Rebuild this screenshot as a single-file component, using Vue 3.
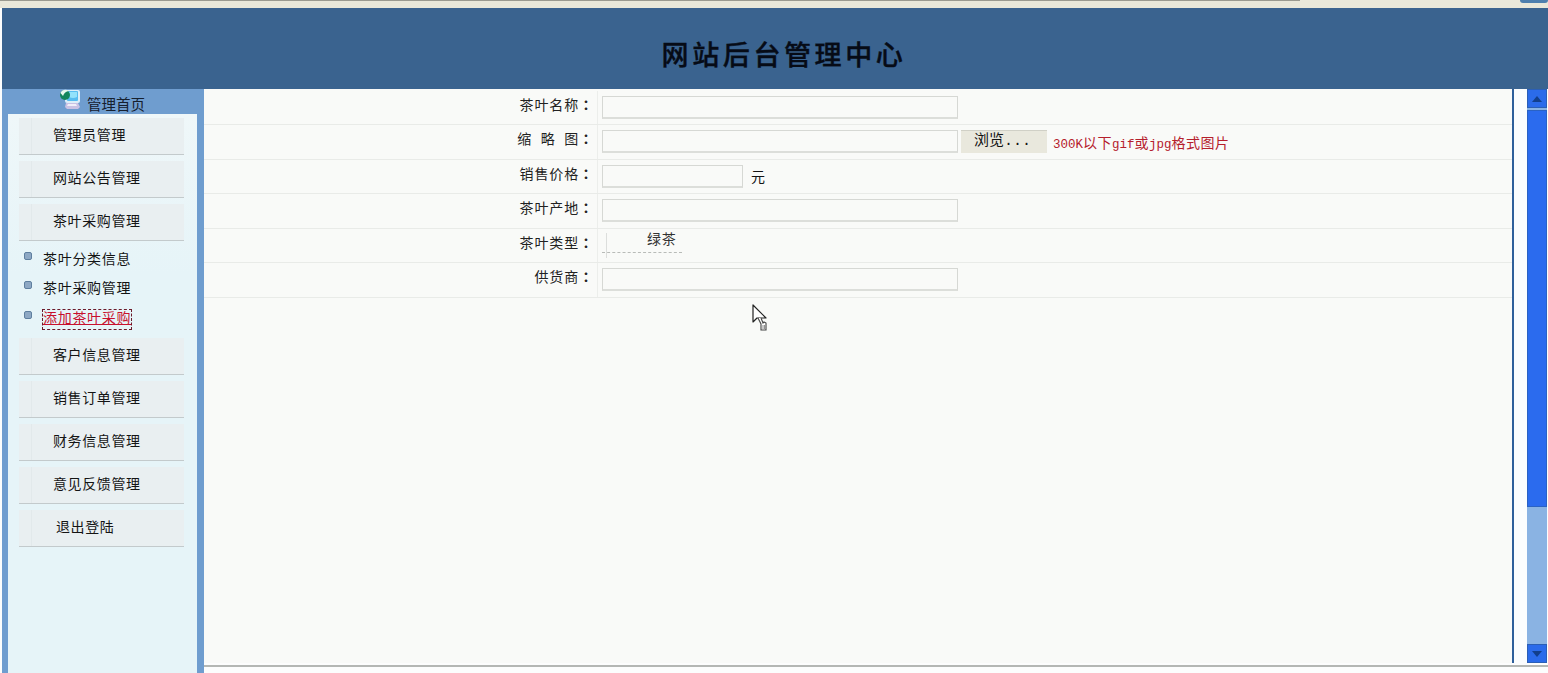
<script setup>
const before = ['管理员管理', '网站公告管理', '茶叶采购管理']
const subs = ['茶叶分类信息', '茶叶采购管理', '添加茶叶采购']
const after = ['客户信息管理', '销售订单管理', '财务信息管理', '意见反馈管理', '退出登陆']
</script>

<template>
  <div class="page">
    <div class="topstrip"><span class="topline"></span><span class="topbtn"></span></div>
    <header class="banner"><h1>网站后台管理中心</h1></header>
    <div class="main">
      <aside class="side">
        <div class="side-head">
          <svg class="home-icon" width="22" height="21" viewBox="0 0 22 21">
            <path d="M7 15h12l2 4-2 2H8l-2-2z" fill="#c9c2e4" />
            <path d="M9 16h8l1 2H8z" fill="#f1eff9" />
            <path d="M6 2h13q2 0 2 2v9q0 2-2 2H8q-2 0-2-2z" fill="#dceef8" />
            <rect x="8" y="3" width="11" height="10" rx="1" fill="#58bdf0" />
            <path d="M10 4h8v5q-4 2-8 0z" fill="#93e2fb" />
            <circle cx="6" cy="7" r="5" fill="#12865c" />
            <path d="M1.5 5C3 1.5 7 1 10 3 7 3.500 5 5 4 8z" fill="#e8f8ee" />
          </svg>
          <span>管理首页</span>
        </div>
        <div class="side-body">
          <div v-for="m in before" :key="m" class="menu-item"><span class="cap"></span><span class="label">{{ m }}</span></div>
          <ul class="sub">
            <li v-for="(s, i) in subs" :key="s" :class="{ active: i === 2 }"><i class="dot"></i><a>{{ s }}</a></li>
          </ul>
          <div v-for="m in after" :key="m" class="menu-item"><span class="cap"></span><span class="label" :class="{ logout: m === '退出登陆' }">{{ m }}</span></div>
        </div>
      </aside>
      <section class="content">
        <div class="upper">
          <div class="frame">
            <div class="form">
              <div class="row"><div class="lab">茶叶名称<span class="colon">：</span></div><div class="val"><span class="inp long"></span></div></div>
              <div class="row"><div class="lab">缩 略 图<span class="colon">：</span></div><div class="val"><span class="inp long"></span><span class="browse">浏览...</span><span class="hint"><span class="lat">300K</span>以下<span class="lat">gif</span>或<span class="lat">jpg</span>格式图片</span></div></div>
              <div class="row"><div class="lab">销售价格<span class="colon">：</span></div><div class="val"><span class="inp short"></span><span class="unit">元</span></div></div>
              <div class="row"><div class="lab">茶叶产地<span class="colon">：</span></div><div class="val"><span class="inp long"></span></div></div>
              <div class="row"><div class="lab">茶叶类型<span class="colon">：</span></div><div class="val"><span class="select">绿茶</span></div></div>
              <div class="row"><div class="lab">供货商<span class="colon">：</span></div><div class="val"><span class="inp long"></span></div></div>
            </div>
            <svg class="cursor" width="18" height="28" viewBox="0 0 18 28">
              <path d="M1 1v17l4-4h9z" fill="#fff" stroke="#222" stroke-width="1.2" stroke-linejoin="round" />
              <path d="M6 14l3 6v6h5v-7l-2-1-1 1-2-5" fill="#fff" stroke="#444" stroke-width="1.1" />
              <path d="M11 21v4M12.500 21v4" fill="none" stroke="#777" stroke-width=".8" />
            </svg>
          </div>
          <div class="gutter"></div>
          <div class="scrollbar">
            <div class="sb-btn"><svg width="10" height="6" viewBox="0 0 10 6"><path d="M5 0l5 6H0z" fill="#123f8c" /></svg></div>
            <div class="thumb"></div>
            <div class="track"></div>
            <div class="sb-btn"><svg width="10" height="6" viewBox="0 0 10 6"><path d="M5 6L0 0h10z" fill="#123f8c" /></svg></div>
          </div>
        </div>
        <div class="rule"></div>
      </section>
    </div>
  </div>
</template>

<style>
html, body { margin: 0; background: #fff; overflow: hidden; }
</style>

<style scoped>
.page {
  width: 1548px;
  height: 673px;
  display: flex;
  flex-direction: column;
  overflow: hidden;
  font-family: "Noto Sans CJK SC", "Liberation Sans", sans-serif;
  font-size: 14px;
  color: #141414;
  background: #fcfdfd;
}
.topstrip {
  height: 8px;
  flex: none;
  background: #e9e8da;
  display: flex;
  justify-content: space-between;
  align-items: flex-start;
}
.topline { width: 1300px; height: 1px; background: #9a9a90; }
.topbtn { width: 28px; height: 3px; background: #4d7fae; border-radius: 0 0 4px 4px; }
.banner {
  height: 81px;
  flex: none;
  margin-left: 2px;
  background: #3a638f;
  display: flex;
  justify-content: center;
  align-items: center;
}
.banner h1 {
  margin: 10px 0 0 18px;
  font-size: 27px;
  line-height: 36px;
  font-weight: 500;
  letter-spacing: 3.6px;
  color: #060b16;
  -webkit-text-stroke: .4px #060b16;
}
.main { flex: 1; display: flex; min-height: 0; }
.side {
  width: 202px;
  margin-left: 2px;
  flex: none;
  background: #6f9dcf;
  display: flex;
  flex-direction: column;
}
.side-head {
  height: 25px;
  flex: none;
  display: flex;
  align-items: flex-end;
  padding-left: 57px;
  gap: 6px;
  box-sizing: border-box;
  line-height: 20px;
  font-size: 14.5px;
  color: #16202e;
  white-space: nowrap;
}
.home-icon { margin-bottom: 5px; }
.side-body {
  flex: 1;
  margin: 0 7px 0 6px;
  padding: 4px 0 0 11px;
  background: linear-gradient(#eff7f9, #e6f4f8 160px);
}
.menu-item {
  width: 165px;
  height: 37px;
  margin-bottom: 6px;
  display: flex;
  background: #e9eff1;
  border-bottom: 1px solid #c3cacc;
  box-sizing: border-box;
}
.cap { width: 12px; margin-right: 3px; border-right: 1px solid #e2e9eb; flex: none; }
.label {
  padding-left: 18px;
  line-height: 32px;
  letter-spacing: .6px;
  white-space: nowrap;
}
.logout { padding-left: 21px; }
.sub {
  list-style: none;
  margin: -4px 0 0;
  padding: 0 0 0 5px;
  height: 95px;
}
.sub li {
  height: 29.5px;
  display: flex;
  align-items: center;
  line-height: 22px;
  letter-spacing: .7px;
}
.dot {
  width: 8px;
  height: 8px;
  border-radius: 2px;
  background: #8ea8c4;
  border: 1px solid #5f7f9f;
  margin-right: 11px;
  margin-top: -4px;
  box-sizing: border-box;
}
.sub li.active a {
  display: block;
  height: 19px;
  margin-top: 5px;
  color: #c8102e;
  outline: 1px dashed #6b1a2a;
  line-height: 14px;
  text-decoration: underline;
}
.content { flex: 1; min-width: 0; display: flex; flex-direction: column; }
.upper { display: flex; height: 574px; flex: none; }
.rule {
  height: 2px;
  margin-top: 2px;
  flex: none;
  background: #b4b7b4;
}
.frame {
  position: relative;
  flex: 1;
  background: #f9faf8;
  border-right: 2px solid #2f609b;
  box-sizing: border-box;
  padding-top: 1.5px;
}
.gutter { width: 13px; flex: none; background: #fbfdfe; }
.scrollbar {
  width: 20px;
  flex: none;
  margin-right: 1px;
  display: flex;
  flex-direction: column;
  background: #8ab3e3;
}
.sb-btn {
  height: 19px;
  flex: none;
  background: #2b6bea;
  border: 1px solid #2b5fb6;
  box-sizing: border-box;
  display: flex;
  align-items: center;
  justify-content: center;
}
.thumb {
  height: 397px;
  flex: none;
  margin-top: 2px;
  background: #2b6bee;
  border: 1px solid #2a62c4;
  box-sizing: border-box;
}
.track { flex: 1; }
.form { display: flex; flex-direction: column; }
.row {
  height: 34.5px;
  display: flex;
  box-sizing: border-box;
  border-bottom: 1px solid #e9ebe8;
}
.lab {
  width: 394px;
  flex: none;
  box-sizing: border-box;
  padding: 3px 3px 0 0;
  border-right: 1px solid #eceeeb;
  text-align: right;
  line-height: 20px;
  letter-spacing: .9px;
  word-spacing: 4.5px;
  color: #222;
  white-space: pre;
}
.colon { font-family: "Noto Sans CJK TC", sans-serif; font-weight: 700; }
.val {
  flex: 1;
  display: flex;
  align-items: flex-start;
  padding: 5px 0 0 4px;
}
.inp {
  height: 23px;
  box-sizing: border-box;
  flex: none;
  background: #f9faf8;
  border: 1px solid #d6d8d4;
  border-bottom: 2px solid #dcdeda;
}
.long { width: 356px; }
.short { width: 141px; }
.unit { margin: 1px 0 0 8px; line-height: 20px; font-size: 14px; }
.browse {
  width: 86px;
  height: 23px;
  margin-left: 3px;
  flex: none;
  box-sizing: border-box;
  background: #e9e8dd;
  border-top: 1px solid #d0d0c6;
  padding-left: 13px;
  line-height: 22px;
  font-family: "Liberation Mono", "Noto Sans CJK SC", monospace;
  font-size: 15px;
  color: #141414;
}
.hint {
  margin: 2px 0 0 6px;
  line-height: 20px;
  font-size: 14px;
  letter-spacing: .5px;
  color: #b5202c;
  white-space: nowrap;
}
.lat {
  font-family: "Liberation Mono", monospace;
  font-size: 12.5px;
  letter-spacing: 0;
}
.select {
  position: relative;
  width: 80px;
  height: 22px;
  margin-top: -3px;
  box-sizing: border-box;
  padding-left: 45px;
  border-bottom: 1px dashed #b8bbb8;
  font-size: 14px;
  line-height: 14px;
  letter-spacing: .8px;
  color: #333;
}
.select::before {
  content: "";
  position: absolute;
  left: 4px;
  top: 2px;
  height: 25px;
  border-left: 1px solid #dcdedc;
}
.cursor { position: absolute; left: 548px; top: 215px; }
</style>
